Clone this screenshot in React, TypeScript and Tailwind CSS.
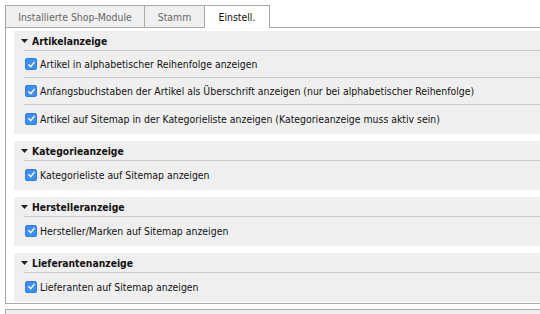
import React from "react";

function Check() {
  return (
    <span className="w-[12px] h-[12px] rounded-[3px] bg-[#3d8ff0] flex items-center justify-center shrink-0 shadow-[inset_0_0_0_1px_#2f7fe0]">
      <svg width="9" height="9" viewBox="0 0 10 10">
        <path d="M2 5.3 L4.2 7.4 L8 2.6" fill="none" stroke="#fff" strokeWidth="1.6" strokeLinecap="round" strokeLinejoin="round" />
      </svg>
    </span>
  );
}

function Section({ title, rows }: { title: string; rows: string[] }) {
  return (
    <div className="bg-[#efefef] pb-[2px]">
      <div className="flex items-center h-[20px] border-b border-[#c9c9c9] ml-[10px]">
        <svg width="7" height="5" viewBox="0 0 7 5" className="mr-[4px] -ml-[3px] mt-[1px]">
          <path d="M0 0 L7 0 L3.5 4 Z" fill="#222" />
        </svg>
        <span className="font-bold text-[#111] text-[10.3px]">{title}</span>
      </div>
      {rows.map((r, i) => (
        <div
          key={i}
          className={
            "ml-[10px] h-[27px] flex items-center gap-[3px] pl-[1px] " +
            (i < rows.length - 1 ? "border-b border-[#c9c9c9]" : "")
          }
        >
          <Check />
          <span className="text-[#111]">{r}</span>
        </div>
      ))}
    </div>
  );
}

export default function App() {
  return (
    <div className="w-[540px] h-[314px] overflow-hidden bg-white text-[10.4px] leading-[14px] font-['DejaVu_Sans_Condensed','DejaVu_Sans',sans-serif]">
      <div className="pl-[5px] pt-[5px] w-[620px]">
        <div className="flex h-[23px]">
          <div className="w-[140px] border border-[#aaa] bg-[#f0f0f0] text-[#666] flex items-center justify-center">
            Installierte Shop-Module
          </div>
          <div className="w-[60px] border-t border-r border-b border-[#aaa] bg-[#f0f0f0] text-[#666] flex items-center justify-center">
            Stamm
          </div>
          <div className="w-[65px] border-t border-r border-[#aaa] bg-white text-[#111] flex items-center justify-center">
            Einstell.
          </div>
          <div className="flex-1 border-b border-[#aaa]" />
        </div>
        <div className="border-l border-b border-[#aaa] pl-[8px] pt-[3px] pb-[1px] flex flex-col gap-[7px]">
          <Section
            title="Artikelanzeige"
            rows={[
              "Artikel in alphabetischer Reihenfolge anzeigen",
              "Anfangsbuchstaben der Artikel als Überschrift anzeigen (nur bei alphabetischer Reihenfolge)",
              "Artikel auf Sitemap in der Kategorieliste anzeigen (Kategorieanzeige muss aktiv sein)",
            ]}
          />
          <Section title="Kategorieanzeige" rows={["Kategorieliste auf Sitemap anzeigen"]} />
          <Section title="Herstelleranzeige" rows={["Hersteller/Marken auf Sitemap anzeigen"]} />
          <Section title="Lieferantenanzeige" rows={["Lieferanten auf Sitemap anzeigen"]} />
        </div>
        <div className="mt-[5px] h-[20px] border-t border-l border-[#aaa] bg-[#efefef]" />
      </div>
    </div>
  );
}
